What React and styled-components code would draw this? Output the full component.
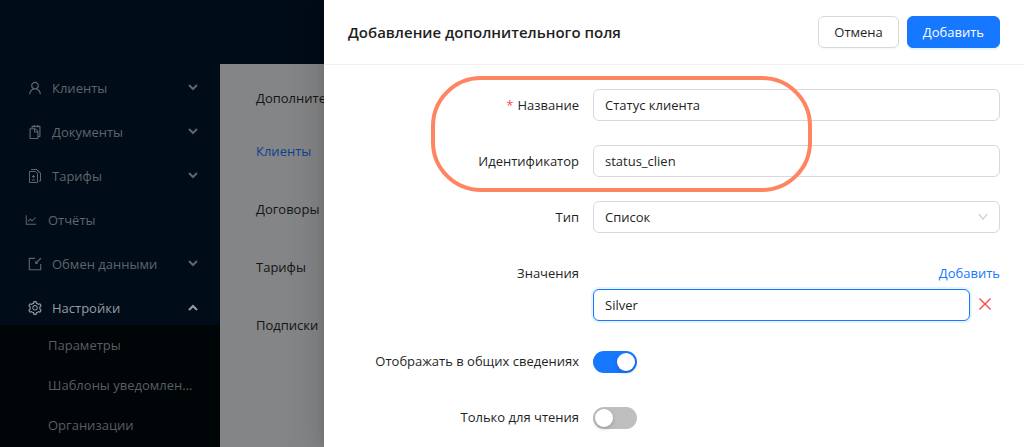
import { useState } from 'react';
import styled, { createGlobalStyle } from 'styled-components';
import {
  AiOutlineClose,
  AiOutlineDown,
  AiOutlineImport,
  AiOutlineLineChart,
  AiOutlineSetting,
  AiOutlineSnippets,
  AiOutlineUser,
} from 'react-icons/ai';

const GlobalStyle = createGlobalStyle`
  * {
    box-sizing: border-box;
  }
  body {
    margin: 0;
    font-family: 'Open Sans', sans-serif;
    font-size: 13px;
    line-height: 22px;
    color: #1f1f1f;
    background: #848587;
  }
  a {
    text-decoration: none;
  }
  button, input, select {
    font: inherit;
    color: inherit;
  }
`;

const Page = styled.div`
  position: relative;
  height: 100vh;
  overflow: hidden;
`;
const Topbar = styled.header`
  height: 64px;
  background-color: #000c17;
`;
const Body = styled.div`
  display: flex;
  min-height: calc(100vh - 64px);
`;
const Sidebar = styled.nav`
  flex: none;
  width: 220px;
  padding-top: 7px;
  background-color: #000c17;
`;
const MenuItem = styled.a`
  display: flex;
  align-items: center;
  height: 34px;
  padding: 0 22px 0 ${props => (props.$flat ? '24px' : '27px')};
  color: ${props => (props.$active ? '#979ca0' : '#5e656b')};

  & + & {
    margin-top: 10px;
  }
  > svg:first-child {
    flex: none;
    margin-right: ${props => (props.$flat ? '10px' : '9px')};
  }
`;
const MenuText = styled.span`
  flex: 1;
`;
const Submenu = styled.div`
  padding-bottom: 4px;
  background-color: #000508;
`;
const SubmenuItem = styled.a`
  display: block;
  height: 40px;
  padding-right: 24px;
  padding-left: 48px;
  line-height: 40px;
  overflow: hidden;
  white-space: nowrap;
  text-overflow: ellipsis;
  color: #5a5e61;
`;
const Content = styled.main`
  flex: 1;
  padding: 23px 36px;
  white-space: nowrap;
`;
const Tab = styled.a`
  display: block;
  margin-bottom: 36px;
  color: ${props => (props.$active ? '#0c418f' : '#151515')};
`;
const Heading = styled.div`
  margin-bottom: 31px;
  color: #151515;
`;

const Drawer = styled.section`
  position: absolute;
  top: 0;
  right: 0;
  bottom: 0;
  left: 324px;
  background-color: white;
  box-shadow: -6px 0 16px rgba(0, 0, 0, .08), -3px 0 6px -4px rgba(0, 0, 0, .12), -9px 0 28px 8px rgba(0, 0, 0, .05);
`;
const DrawerHeader = styled.div`
  display: flex;
  align-items: center;
  height: 65px;
  padding: 0 24px;
  border-bottom: 1px solid #f0f0f0;
`;
const Title = styled.h1`
  flex: 1;
  margin: 0;
  font-size: 15px;
  font-weight: 600;
`;
const Button = styled.button`
  height: 32px;
  margin-left: 8px;
  padding: 0 15px;
  border: 1px solid ${props => (props.$primary ? '#1677ff' : '#d9d9d9')};
  border-radius: 6px;
  color: ${props => (props.$primary ? 'white' : '#1f1f1f')};
  background-color: ${props => (props.$primary ? '#1677ff' : 'white')};
  box-shadow: 0 2px 0 ${props => (props.$primary ? 'rgba(5, 145, 255, .1)' : 'rgba(0, 0, 0, .02)')};
  cursor: pointer;
`;
const Form = styled.form`
  position: relative;
  display: flex;
  flex-direction: column;
  gap: 24px;
  padding: 24px;
`;
const Row = styled.div`
  display: grid;
  grid-template-columns: 245px 1fr;
  align-items: start;
`;
const Label = styled.label`
  padding-right: 14px;
  line-height: 32px;
  text-align: right;
`;
const Required = styled.span`
  margin-right: 4px;
  color: #ff4d4f;
`;
const Input = styled.input`
  width: 100%;
  min-width: 0;
  height: 32px;
  padding: 4px 11px;
  border: 1px solid ${props => (props.$active ? '#1677ff' : '#d9d9d9')};
  border-radius: 6px;
  outline: none;
  background-color: white;
  box-shadow: ${props => (props.$active ? '0 0 0 2px rgba(5, 145, 255, .1)' : 'none')};
`;
const SelectWrap = styled.div`
  display: grid;
  align-items: center;

  > * {
    grid-area: 1 / 1;
  }
  > svg {
    justify-self: end;
    margin-right: 11px;
    color: #bfbfbf;
    pointer-events: none;
  }
`;
const Select = styled.select`
  width: 100%;
  height: 32px;
  padding: 0 11px;
  border: 1px solid #d9d9d9;
  border-radius: 6px;
  background-color: white;
  appearance: none;
`;
const AddLine = styled.div`
  display: flex;
  justify-content: flex-end;
  line-height: 32px;

  > a {
    color: #1677ff;
  }
`;
const ValueLine = styled.div`
  display: flex;
  align-items: center;
  gap: 6px;
`;
const Remove = styled.button`
  display: flex;
  flex: none;
  padding: 0 6px 2px 0;
  border: none;
  color: #ff4d4f;
  background: none;
  cursor: pointer;
`;
const Switch = styled.input`
  display: flex;
  align-items: center;
  width: 44px;
  height: 22px;
  margin: 6px 0 4px;
  padding: 2px;
  border-radius: 11px;
  background-color: #bfbfbf;
  appearance: none;
  cursor: pointer;

  &::before {
    content: '';
    width: 18px;
    height: 18px;
    border-radius: 9px;
    background-color: white;
    box-shadow: 0 2px 4px rgba(0, 35, 11, .2);
  }
  &:checked {
    justify-content: flex-end;
    background-color: #1677ff;
  }
`;
// outline drawn over the two main fields
const Highlight = styled.div`
  position: absolute;
  top: 11px;
  left: 107px;
  width: 381px;
  height: 116px;
  border: 4px solid #ff8562;
  border-radius: 50px;
  pointer-events: none;
`;

function TariffIcon() {
  return (
    <svg width="16" height="16" viewBox="0 0 16 16" fill="none" stroke="currentColor">
      <path d="M2.5 3.5h6l2 2v9h-8z" />
      <path d="M4 1.5h6l3.5 3.5v8h-1.5M10 2l2.5 3" />
      <path d="M5 8.5h3M6.5 7v3M5 12h3" />
    </svg>
  );
}

function Arrow({ up }) {
  return (
    <svg width="10" height="10" viewBox="0 0 10 10" fill="none" stroke="currentColor" strokeWidth="2">
      <path d={up ? 'M1 7l4-4 4 4' : 'M1 2l4 4 4-4'} />
    </svg>
  );
}

const menu = [
  { text: 'Клиенты', icon: AiOutlineUser },
  { text: 'Документы', icon: AiOutlineSnippets },
  { text: 'Тарифы', icon: TariffIcon },
  { text: 'Отчёты', icon: AiOutlineLineChart, flat: true },
  { text: 'Обмен данными', icon: AiOutlineImport },
  { text: 'Настройки', icon: AiOutlineSetting, active: true },
];
const submenu = ['Параметры', 'Шаблоны уведомлений', 'Организации'];
const tabs = ['Клиенты', 'Договоры', 'Тарифы', 'Подписки'];

export default function App() {
  const [name, setName] = useState('Статус клиента');
  const [code, setCode] = useState('status_clien');
  const [value, setValue] = useState('Silver');

  return (
    <Page>
      <GlobalStyle />
      <Topbar />
      <Body>
        <Sidebar>
          {menu.map(({ text, icon: Icon, flat, active }) => (
            <MenuItem key={text} href="#" $flat={flat} $active={active}>
              <Icon size={flat ? 14 : 16} />
              <MenuText>{text}</MenuText>
              {!flat && <Arrow up={active} />}
            </MenuItem>
          ))}
          <Submenu>
            {submenu.map(text => <SubmenuItem key={text} href="#">{text}</SubmenuItem>)}
          </Submenu>
        </Sidebar>
        <Content>
          <Heading>Дополнительные поля</Heading>
          {tabs.map((text, i) => <Tab key={text} href="#" $active={i === 0}>{text}</Tab>)}
        </Content>
      </Body>

      <Drawer>
        <DrawerHeader>
          <Title>Добавление дополнительного поля</Title>
          <Button type="button">Отмена</Button>
          <Button type="submit" form="field-form" $primary>Добавить</Button>
        </DrawerHeader>
        <Form id="field-form" onSubmit={e => e.preventDefault()}>
          <Row>
            <Label htmlFor="name"><Required>*</Required>Название</Label>
            <Input id="name" value={name} onChange={e => setName(e.target.value)} />
          </Row>
          <Row>
            <Label htmlFor="code">Идентификатор</Label>
            <Input id="code" value={code} onChange={e => setCode(e.target.value)} />
          </Row>
          <Row>
            <Label htmlFor="type">Тип</Label>
            <SelectWrap>
              <Select id="type">
                <option>Список</option>
              </Select>
              <AiOutlineDown size={12} />
            </SelectWrap>
          </Row>
          <Row>
            <Label htmlFor="value">Значения</Label>
            <div>
              <AddLine><a href="#">Добавить</a></AddLine>
              <ValueLine>
                <Input id="value" $active value={value} onChange={e => setValue(e.target.value)} />
                <Remove type="button" aria-label="Удалить"><AiOutlineClose size={18} /></Remove>
              </ValueLine>
            </div>
          </Row>
          <Row>
            <Label htmlFor="common">Отображать в общих сведениях</Label>
            <Switch id="common" type="checkbox" defaultChecked />
          </Row>
          <Row>
            <Label htmlFor="readonly">Только для чтения</Label>
            <Switch id="readonly" type="checkbox" />
          </Row>
          <Highlight />
        </Form>
      </Drawer>
    </Page>
  );
}
